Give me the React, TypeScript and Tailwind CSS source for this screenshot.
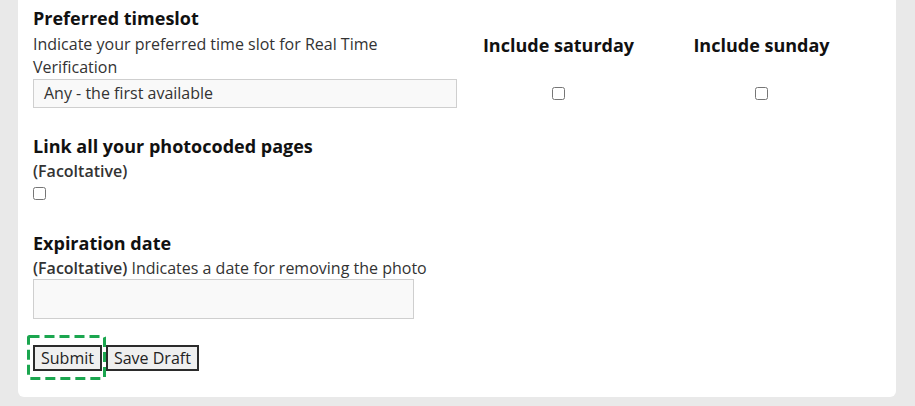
import React from "react";

export default function App() {
  const font = { fontFamily: '"Open Sans", "Noto Sans", sans-serif' };
  return (
    <div className="min-h-screen bg-[#e9e9e9] pl-[18px] pr-[19px] pb-[10px]" style={font}>
      <div className="bg-white rounded-b-[6px] pl-[15px] pt-[5px] pb-[26px] text-[#222]">
        <div className="grid grid-cols-[424px_203px_203px]">
          <div>
            <h3 className="text-[18px] font-bold leading-[26px] text-[#111]">Preferred timeslot</h3>
            <p className="text-[16px] leading-[23px] mt-[2px] text-[#333]">
              Indicate your preferred time slot for Real Time Verification
            </p>
            <div className="h-[29px] border border-[#cfcfcf] bg-[#f9f9f9] pl-[10px] text-[16px] leading-[27px] text-[#333]">
              Any - the first available
            </div>
          </div>
          <div className="flex flex-col items-center pt-[28px]">
            <h3 className="text-[18px] font-bold leading-[24px] text-[#111]">Include saturday</h3>
            <input type="checkbox" className="mt-[30px] w-[13px] h-[13px]" />
          </div>
          <div className="flex flex-col items-center pt-[28px]">
            <h3 className="text-[18px] font-bold leading-[24px] text-[#111]">Include sunday</h3>
            <input type="checkbox" className="mt-[30px] w-[13px] h-[13px]" />
          </div>
        </div>

        <div className="mt-[26px]">
          <h3 className="text-[18px] font-bold leading-[24px] text-[#111]">Link all your photocoded pages</h3>
          <p className="text-[16px] leading-[22px] font-semibold text-[#333] mt-[2px]">(Facoltative)</p>
          <input type="checkbox" className="block w-[13px] h-[13px] mt-[5px]" />
        </div>

        <div className="mt-[31px]">
          <h3 className="text-[18px] font-bold leading-[24px] text-[#111]">Expiration date</h3>
          <p className="text-[16px] leading-[22px] text-[#333] mt-[2px]">
            <span className="font-semibold">(Facoltative)</span> Indicates a date for removing the photo
          </p>
          <div className="w-[381px] h-[40px] border border-[#cfcfcf] bg-[#f9f9f9]" />
        </div>

        <div className="mt-[26px] flex items-start">
          <div className="relative">
            <button className="h-[26px] px-[6px] border-2 border-[#2b2b2b] bg-[#efefef] text-[16px] leading-[20px] text-[#222]">
              Submit
            </button>
            <svg className="absolute left-[-6px] top-[-10px]" width="79" height="45">
              <rect x="1.5" y="1.5" width="76" height="42" fill="none" stroke="#1ba64f" strokeWidth="3" strokeDasharray="10 5" rx="1" />
            </svg>
          </div>
          <button className="ml-[4px] h-[26px] px-[6px] border-2 border-[#2b2b2b] bg-[#efefef] text-[16px] leading-[20px] text-[#222]">
            Save Draft
          </button>
        </div>
      </div>
    </div>
  );
}
